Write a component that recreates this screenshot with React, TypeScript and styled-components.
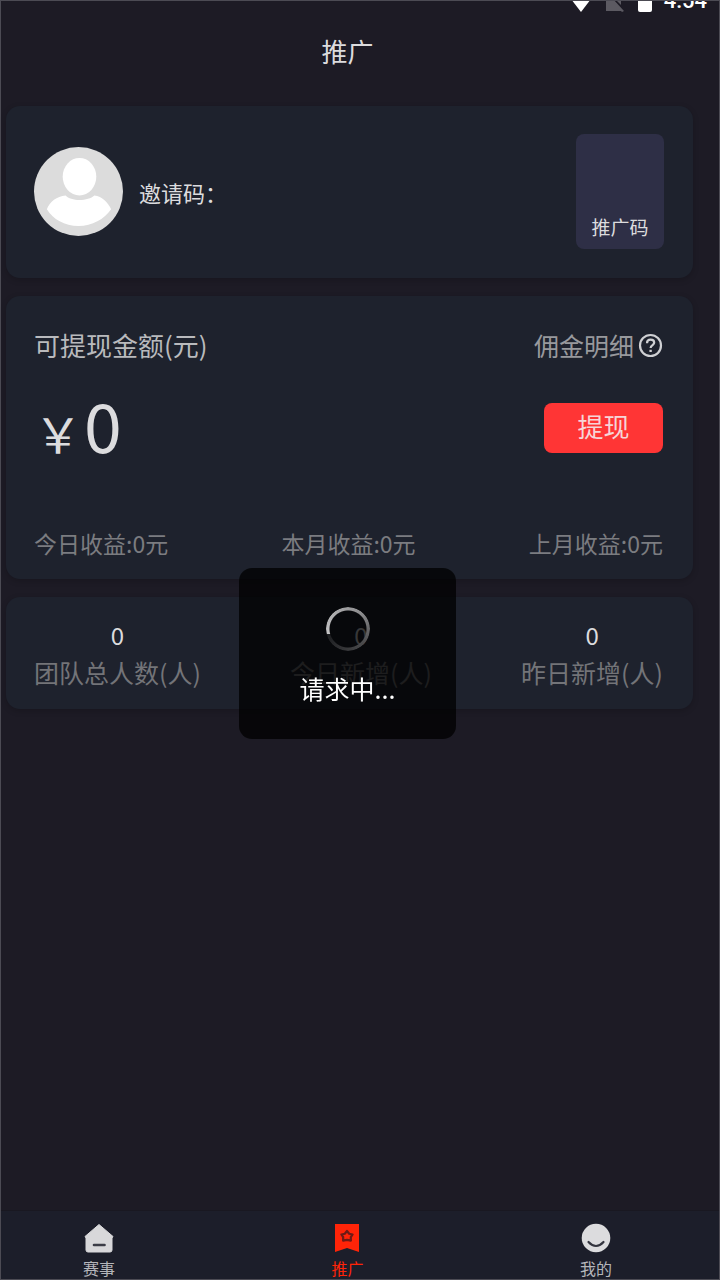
import React from "react";
import styled, { createGlobalStyle, keyframes } from "styled-components";

const GlobalStyle = createGlobalStyle`
  * { box-sizing: border-box; }
  body {
    margin: 0;
    background: #1d1b25;
    font-family: "Noto Sans CJK SC", "Noto Sans", sans-serif;
    color: #dcdcde;
  }
  button { font: inherit; border: 0; padding: 0; cursor: pointer; }
  a { color: inherit; text-decoration: none; }
  p, h1, h2 { margin: 0; font-weight: 400; }
`;

const Screen = styled.div`
  display: flex;
  flex-direction: column;
  min-height: 100vh;
  border: 1px solid #4c4b54;
`;

const StatusBar = styled.div`
  display: flex;
  justify-content: flex-end;
  align-items: flex-end;
  height: 11px;
  padding-right: 12px;
  overflow: hidden;
`;

const StatusIcons = styled.svg`
  display: block;
  flex: none;
  margin-right: 12px;
`;

const Clock = styled.span`
  font: 500 22px/22px Roboto, sans-serif;
  color: #fff;
`;

const Header = styled.header`
  padding-right: 25px;
  text-align: center;
`;

const Title = styled.h1`
  font-size: 26px;
  line-height: 78px;
`;

const Main = styled.main`
  flex: 1;
  display: flex;
  flex-direction: column;
  gap: 18px;
  padding: 16px 26px 18px 5px;
`;

const Card = styled.section<{ $pad: string }>`
  padding: ${(p) => p.$pad};
  border-radius: 14px;
  background: #1e222d;
  box-shadow: 0 2px 6px rgba(0, 0, 0, 0.18);
`;

const Row = styled.div<{ $top?: number }>`
  display: flex;
  align-items: center;
  justify-content: space-between;
  margin-top: ${(p) => p.$top ?? 0}px;
`;

const Profile = styled.div`
  display: flex;
  align-items: center;
  gap: 16px;
`;

const InviteCode = styled.p`
  font-size: 22px;
  line-height: 34px;
`;

const CodeButton = styled.button`
  display: flex;
  align-items: flex-end;
  justify-content: center;
  width: 88px;
  height: 115px;
  padding-bottom: 8px;
  border-radius: 8px;
  background: #2e2f46;
  color: #dcdcde;
  font-size: 19px;
  line-height: 28px;
`;

const CardTitle = styled.h2`
  font-size: 26px;
  line-height: 44px;
  color: #b9babd;
`;

const DetailLink = styled.a`
  display: flex;
  align-items: center;
  gap: 4px;
  font-size: 25px;
  line-height: 44px;
  color: #98999d;
`;

const Amount = styled.p`
  display: flex;
  align-items: baseline;
  gap: 2px;
  height: 50px;
  line-height: 42px;
`;

const Currency = styled.span`
  font-size: 48px;
`;

const Value = styled.span`
  font-size: 68px;
`;

const WithdrawButton = styled.button`
  width: 119px;
  height: 50px;
  border-radius: 8px;
  background: #ff3535;
  color: #f6d5d8;
  font-size: 26px;
  line-height: 46px;
  padding-bottom: 4px;
`;

const Income = styled.p`
  font-size: 23px;
  line-height: 34px;
  color: #7b7c80;
`;

const Stat = styled.div`
  text-align: center;
`;

const StatValue = styled.p`
  font-size: 24px;
  line-height: 36px;
`;

const StatLabel = styled.p`
  font-size: 25px;
  line-height: 38px;
  color: #737478;
`;

const TabBar = styled.nav`
  display: flex;
  justify-content: space-between;
  padding: 12px 107px 0 82px;
  border-top: 1px solid #191821;
  background: #1c1e2a;
`;

const Tab = styled.a<{ $active?: boolean }>`
  display: flex;
  flex-direction: column;
  align-items: center;
  gap: 4px;
  font-size: 16px;
  line-height: 21px;
  color: ${(p) => (p.$active ? "#ff2408" : "#b4b5ba")};
`;

const ToastLayer = styled.div`
  position: fixed;
  inset: 0;
  display: flex;
  align-items: center;
  justify-content: center;
  padding: 27px 25px 0 0;
  pointer-events: none;
`;

const Toast = styled.div`
  display: flex;
  flex-direction: column;
  align-items: center;
  gap: 18px;
  width: 217px;
  height: 171px;
  padding-top: 39px;
  border-radius: 13px;
  background: rgba(0, 0, 0, 0.75);
  color: #fff;
  font-size: 25px;
  line-height: 38px;
`;

const spin = keyframes`
  to { transform: rotate(360deg); }
`;

const Spinner = styled.div`
  width: 44px;
  height: 44px;
  border-radius: 50%;
  background: conic-gradient(from 255deg, #c4c4c6, #8c8c8e 40%, #4c4c4e 65%, #1c1d20 100%);
  mask: radial-gradient(circle, transparent 18px, #000 19px);
  animation: ${spin} 1s steps(12) infinite paused;
`;

const Avatar = () => (
  <svg width="89" height="89" viewBox="0 0 90 90" aria-hidden="true">
    <circle cx="45" cy="45" r="45" fill="#dcdcdc" />
    <ellipse cx="46" cy="30" rx="17" ry="19" fill="#fff" />
    <path d="M32 49C37 55 55 55 61 49C69 50 75 56 78 63C71 73 59 80 45 80C31 80 19 73 13 63C16 55 23 50 32 49Z" fill="#fff" />
  </svg>
);

const HelpIcon = () => (
  <svg width="25" height="25" viewBox="0 0 25 25" fill="none" stroke="#cfd0d3" aria-hidden="true">
    <circle cx="12.5" cy="12.5" r="10.5" strokeWidth="2.2" />
    <path d="M9 10.2C9 8 10.4 6.7 12.6 6.7C14.8 6.7 16.2 8 16.2 9.8C16.2 12 12.6 12.2 12.6 15" strokeWidth="2.2" />
    <path d="M12.6 16.8V19" strokeWidth="2.4" />
  </svg>
);

const HomeIcon = () => (
  <svg width="32" height="31" viewBox="0 0 32 31" aria-hidden="true">
    <path d="M16 1.5L30 13.5L29 15V27Q29 29 27 29H5Q3 29 3 27V15L2 13.5Z" fill="#d8d8da" stroke="#d8d8da" strokeLinejoin="round" />
    <path d="M11 22H21.500" stroke="#3b3c46" strokeWidth="2.600" strokeLinecap="round" />
  </svg>
);

const PromoIcon = () => (
  <svg width="32" height="31" viewBox="0 0 32 31" aria-hidden="true">
    <path d="M4 1H28V29L16 25L4 29Z" fill="#ff2408" />
    <path
      d="M16 8L18.200 10.700L21.600 11.500L19.800 14.200L19.900 17.600L16 16.800L12.100 17.600L12.200 14.200L10.400 11.500L13.800 10.700Z"
      fill="none"
      stroke="#6d1a16"
      strokeWidth="2.200"
      strokeLinejoin="round"
    />
  </svg>
);

const FaceIcon = () => (
  <svg width="32" height="31" viewBox="0 0 32 31" aria-hidden="true">
    <circle cx="16" cy="15" r="14.300" fill="#dcdcde" />
    <path d="M8.500 19Q16 27 23.500 19" fill="none" stroke="#33343e" strokeWidth="2.200" strokeLinecap="round" />
  </svg>
);

const incomes = ["今日收益:0元", "本月收益:0元", "上月收益:0元"];
const stats = ["团队总人数(人)", "今日新增(人)", "昨日新增(人)"];

export default function App() {
  return (
    <Screen>
      <GlobalStyle />
      <StatusBar>
        <StatusIcons width="81" height="12" viewBox="0 0 81 12" aria-hidden="true">
          <path d="M0 -1H20L10 12Z" fill="#fff" />
          <path d="M35 -1L42 -1L53 11L51 12L50 11H35Z" fill="#5c5a62" />
          <path d="M44 -1H50V5Z" fill="#5c5a62" />
          <path d="M67 -1H81V10Q81 12 79 12H69Q67 12 67 10Z" fill="#fff" />
        </StatusIcons>
        <Clock>4:54</Clock>
      </StatusBar>
      <Header>
        <Title>推广</Title>
      </Header>
      <Main>
        <Card $pad="28px 29px 29px 28px">
          <Row>
            <Profile>
              <Avatar />
              <InviteCode>邀请码：</InviteCode>
            </Profile>
            <CodeButton type="button">推广码</CodeButton>
          </Row>
        </Card>
        <Card $pad="27px 30px 19px 28px">
          <Row>
            <CardTitle>可提现金额(元)</CardTitle>
            <DetailLink href="#detail">
              佣金明细
              <HelpIcon />
            </DetailLink>
          </Row>
          <Row $top={36}>
            <Amount>
              <Currency>￥</Currency>
              <Value>0</Value>
            </Amount>
            <WithdrawButton type="button">提现</WithdrawButton>
          </Row>
          <Row $top={73}>
            {incomes.map((text) => (
              <Income key={text}>{text}</Income>
            ))}
          </Row>
        </Card>
        <Card $pad="20px 30px 18px 28px">
          <Row>
            {stats.map((label) => (
              <Stat key={label}>
                <StatValue>0</StatValue>
                <StatLabel>{label}</StatLabel>
              </Stat>
            ))}
          </Row>
        </Card>
      </Main>
      <TabBar>
        <Tab href="#events">
          <HomeIcon />
          赛事
        </Tab>
        <Tab href="#promo" $active aria-current="page">
          <PromoIcon />
          推广
        </Tab>
        <Tab href="#mine">
          <FaceIcon />
          我的
        </Tab>
      </TabBar>
      <ToastLayer>
        <Toast role="status">
          <Spinner />
          请求中...
        </Toast>
      </ToastLayer>
    </Screen>
  );
}
